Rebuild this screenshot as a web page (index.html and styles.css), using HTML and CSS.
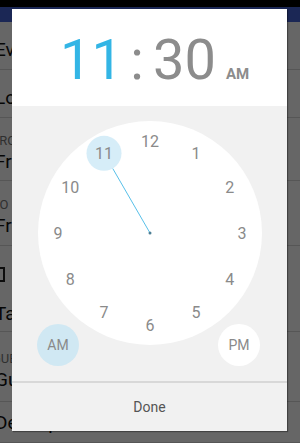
FILE: index.html
```html
<!DOCTYPE html>
<html lang="en">
<head>
    <meta charset="UTF-8">
    <meta name="viewport" content="width=device-width, initial-scale=1.0">
    <title>Set time</title>
    <link rel="stylesheet" href="styles.css">
</head>
<body>
    <div class="status-bar"></div>
    <div class="app-bar"></div>

    <!-- the form behind the dialog -->
    <div class="form">
        <div class="row row-first"><span class="value">Event name</span></div>
        <div class="row row-short"><span class="value">Location</span></div>
        <div class="row row-pair">
            <span class="label">FROM</span>
            <span class="value">Fri, Mar 7</span>
        </div>
        <div class="row row-pair">
            <span class="label">TO</span>
            <span class="value">Fri, Mar 7</span>
        </div>
        <div class="row row-check">
            <span class="check"></span>
            <span class="value">Take a break</span>
        </div>
        <div class="row row-guests">
            <span class="label">GUESTS</span>
            <span class="value">Guests</span>
        </div>
        <div class="row row-last"><span class="value">Description</span></div>
    </div>

    <div class="scrim"></div>

    <div class="dialog">
        <div class="time-header">
            <span class="hours">11</span>
            <span class="colon">:</span>
            <span class="minutes">30</span>
            <span class="ampm">AM</span>
        </div>

        <div class="clock-area">
            <div class="clock">
                <svg width="224" height="224" viewBox="0 0 224 224">
                    <circle cx="112" cy="112" r="112" fill="#ffffff"/>
                    <circle cx="66" cy="32.3" r="17.5" fill="#d6edf8"/>
                    <line x1="112" y1="112" x2="74.8" y2="47.6" stroke="#58c0e9" stroke-width="1"/>
                    <circle cx="112" cy="112" r="1.5" fill="#4d7f95"/>
                    <g class="numbers">
                        <text x="112" y="20" dy="0.36em">12</text>
                        <text x="158" y="32.3" dy="0.36em">1</text>
                        <text x="191.7" y="66" dy="0.36em">2</text>
                        <text x="204" y="112" dy="0.36em">3</text>
                        <text x="191.7" y="158" dy="0.36em">4</text>
                        <text x="158" y="191.7" dy="0.36em">5</text>
                        <text x="112" y="204" dy="0.36em">6</text>
                        <text x="66" y="191.7" dy="0.36em">7</text>
                        <text x="32.3" y="158" dy="0.36em">8</text>
                        <text x="20" y="112" dy="0.36em">9</text>
                        <text x="32.3" y="66" dy="0.36em">10</text>
                        <text x="66" y="32.3" dy="0.36em">11</text>
                    </g>
                </svg>
            </div>
            <div class="ampm-row">
                <div class="ampm-button selected">AM</div>
                <div class="ampm-button">PM</div>
            </div>
        </div>

        <div class="done">Done</div>
    </div>
</body>
</html>
```

FILE: styles.css
```css
body {
    margin: 0;
    font-family: Roboto, "Noto Sans", sans-serif;
    background-color: #ffffff;
    overflow: hidden;
    height: 443px;
}

.status-bar {
    height: 7px;
    background-color: #000;
    position: relative;
    z-index: 2;
}

.app-bar {
    height: 15px;
    background-color: #4462d5;
}

.form {
    display: flex;
    flex-direction: column;
}

.row {
    display: flex;
    flex-direction: column;
    justify-content: center;
    height: 41px;
    padding-top: 8px;
    box-sizing: border-box;
    border-bottom: 1px solid #d8d8d8;
    margin-left: -2px;
    white-space: nowrap;
}

.row-first {
    height: 48px;
}

.row-short {
    height: 48px;
}

.row-pair {
    height: 63px;
}

.row-pair:nth-child(4) {
    height: 65px;
}

.row-check {
    height: 86px;
    justify-content: space-between;
    padding: 21px 0 6px;
}

.row-guests {
    height: 70px;
}

.row-last {
    padding-top: 0;
}

.value {
    font-size: 19px;
    color: #111;
    margin-left: -3px;
}

.label {
    font-size: 13px;
    color: #777;
    margin-left: -6px;
    margin-bottom: 2px;
}

.check {
    width: 12px;
    height: 15px;
    border: 2px solid #222;
    margin-left: -5px;
    box-sizing: border-box;
}

.scrim {
    position: absolute;
    inset: 0;
    background-color: rgba(0, 0, 0, 0.6);
}

.dialog {
    position: absolute;
    left: 12px;
    top: 9px;
    width: 275px;
    height: 422px;
    display: flex;
    flex-direction: column;
    background-color: #f1f1f1;
    box-shadow: 1px 1px 1px rgba(0, 0, 0, 0.35);
}

.time-header {
    height: 97px;
    background-color: #fff;
    display: flex;
    justify-content: center;
    align-items: baseline;
    box-sizing: border-box;
    line-height: 102px;
    overflow: hidden;
    color: #8c8c8c;
}

.hours {
    font-size: 56px;
    color: #33b5e5;
    margin-left: 10px;
}

.colon {
    font-size: 56px;
    margin: 0 9px 0 7.5px;
}

.minutes {
    font-size: 56px;
}

.ampm {
    font-size: 15px;
    font-weight: bold;
    margin-left: 10px;
}

.clock-area {
    flex: 1;
    display: flex;
    flex-direction: column;
    align-items: center;
    padding-top: 15px;
    border-bottom: 2px solid #d8d8d8;
}

.clock {
    width: 224px;
    height: 224px;
}

.clock svg {
    display: block;
}

.numbers text {
    font-family: Roboto, "Noto Sans", sans-serif;
    font-size: 16px;
    fill: #8a8a8a;
    text-anchor: middle;
}

.ampm-row {
    align-self: stretch;
    display: flex;
    justify-content: space-between;
    padding: 0 27px 0 25px;
    margin-top: -21px;
}

.ampm-button {
    width: 42px;
    height: 42px;
    border-radius: 50%;
    background-color: #fff;
    color: #8a8a8a;
    font-size: 14px;
    display: flex;
    align-items: center;
    justify-content: center;
}

.ampm-button.selected {
    background-color: #d0e8f3;
}

.done {
    height: 48px;
    display: flex;
    align-items: center;
    justify-content: center;
    font-size: 14px;
    color: #555;
}
```
